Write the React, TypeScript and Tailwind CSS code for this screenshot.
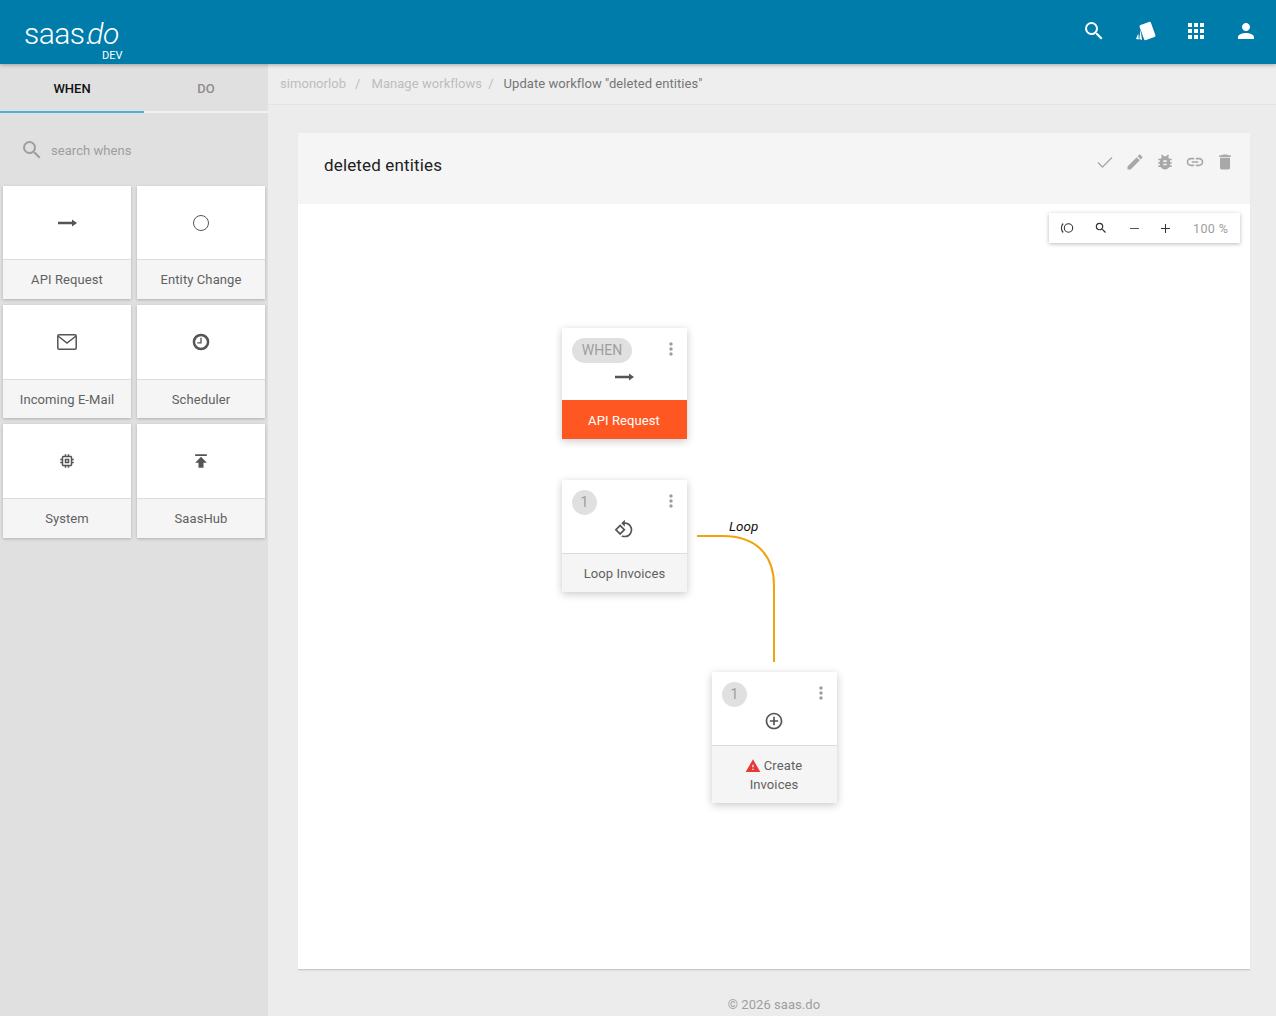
import { ReactNode } from "react";

const paths = {
  search: "M15.5 14h-.79l-.28-.27A6.471 6.471 0 0 0 16 9.5 6.5 6.5 0 1 0 9.5 16c1.61 0 3.09-.59 4.23-1.57l.27.28v.79l5 4.99L20.49 19l-4.99-5zm-6 0C7.01 14 5 11.99 5 9.5S7.01 5 9.5 5 14 7.01 14 9.5 11.99 14 9.5 14z",
  apps: "M4 8h4V4H4v4zm6 12h4v-4h-4v4zm-6 0h4v-4H4v4zm0-6h4v-4H4v4zm6 0h4v-4h-4v4zm6-10v4h4V4h-4zm-6 4h4V4h-4v4zm6 6h4v-4h-4v4zm0 6h4v-4h-4v4z",
  person: "M12 12c2.21 0 4-1.79 4-4s-1.79-4-4-4-4 1.79-4 4 1.79 4 4 4zm0 2c-2.67 0-8 1.34-8 4v2h16v-2c0-2.66-5.33-4-8-4z",
  edit: "M3 17.25V21h3.75L17.81 9.94l-3.75-3.75L3 17.25zM20.71 7.04c.39-.39.39-1.02 0-1.41l-2.34-2.34c-.39-.39-1.02-.39-1.41 0l-1.83 1.83 3.75 3.75 1.83-1.83z",
  bug: "M20 8h-2.81c-.45-.78-1.07-1.45-1.82-1.96L17 4.41 15.59 3l-2.17 2.17C12.96 5.06 12.49 5 12 5c-.49 0-.96.06-1.41.17L8.41 3 7 4.41l1.62 1.63C7.88 6.55 7.26 7.22 6.81 8H4v2h2.09c-.05.33-.09.66-.09 1v1H4v2h2v1c0 .34.04.67.09 1H4v2h2.81c1.04 1.79 2.97 3 5.19 3s4.15-1.21 5.19-3H20v-2h-2.09c.05-.33.09-.66.09-1v-1h2v-2h-2v-1c0-.34-.04-.67-.09-1H20V8zm-6 8h-4v-2h4v2zm0-4h-4v-2h4v2z",
  link: "M3.9 12c0-1.71 1.39-3.1 3.1-3.1h4V7H7c-2.76 0-5 2.24-5 5s2.24 5 5 5h4v-1.9H7c-1.71 0-3.1-1.39-3.1-3.1zM8 13h8v-2H8v2zm9-6h-4v1.9h4c1.71 0 3.1 1.39 3.1 3.1s-1.39 3.1-3.1 3.1h-4V17h4c2.76 0 5-2.24 5-5s-2.24-5-5-5z",
  trash: "M6 19c0 1.1.9 2 2 2h8c1.1 0 2-.9 2-2V7H6v12zM19 4h-3.5l-1-1h-5l-1 1H5v2h14V4z",
  publish: "M5 4v2h14V4H5zm0 10h4v6h6v-6h4l-7-7-7 7z",
  memory: "M15 9H9v6h6V9zm-2 4h-2v-2h2v2zm8-2V9h-2V7c0-1.1-.9-2-2-2h-2V3h-2v2h-2V3H9v2H7c-1.1 0-2 .9-2 2v2H3v2h2v2H3v2h2v2c0 1.1.9 2 2 2h2v2h2v-2h2v2h2v-2h2c1.1 0 2-.9 2-2v-2h2v-2h-2v-2h2zm-4 6H7V7h10v10z",
  warning: "M1 21h22L12 2 1 21zm12-3h-2v-2h2v2zm0-4h-2v-4h2v4z",
  add: "M13 7h-2v4H7v2h4v4h2v-4h4v-2h-4V7zm-1-5C6.48 2 2 6.48 2 12s4.48 10 10 10 10-4.48 10-10S17.52 2 12 2zm0 18c-4.41 0-8-3.59-8-8s3.59-8 8-8 8 3.59 8 8-3.59 8-8 8z",
  loop: "M7.34 6.41L.86 12.9l6.49 6.48 6.49-6.48-6.5-6.49zM3.69 12.9l3.66-3.66L11 12.9l-3.66 3.66-3.65-3.66zm15.67-6.26C17.61 4.88 15.3 4 13 4V.76L8.76 5 13 9.24V6c1.79 0 3.58.68 4.95 2.05 2.73 2.73 2.73 7.17 0 9.9C16.58 19.32 14.79 20 13 20c-.97 0-1.94-.21-2.84-.61l-1.49 1.49C10.02 21.62 11.51 22 13 22c2.3 0 4.61-.88 6.36-2.64 3.52-3.51 3.52-9.21 0-12.72z",
  clock: "M12 2a10 10 0 1 0 0 20 10 10 0 0 0 0-20zm0 17a7 7 0 1 1 0-14 7 7 0 0 1 0 14zm.8-12h-1.600v5.200H7.500v1.600h5.300z",
  more: "M12 8c1.1 0 2-.9 2-2s-.9-2-2-2-2 .9-2 2 .9 2 2 2zm0 2c-1.1 0-2 .9-2 2s.9 2 2 2 2-.9 2-2-.9-2-2-2zm0 6c-1.1 0-2 .9-2 2s.9 2 2 2 2-.9 2-2-.9-2-2-2z",
};

function Icon({ d, className }: { d: string; className: string }) {
  return (
    <svg viewBox="0 0 24 24" className={className} fill="currentColor">
      <path d={d} />
    </svg>
  );
}

function ArrowRight({ className }: { className: string }) {
  return (
    <svg viewBox="0 0 19 10" className={className} fill="currentColor">
      <path d="M0 3.800h14V1.500l5 3.500-5 3.500V6.200H0z" />
    </svg>
  );
}

function CardsIcon() {
  return (
    <svg viewBox="0 0 24 24" className="w-6 h-6 text-white" fill="currentColor">
      <rect x="7.500" y="4" width="12" height="16" rx="1.500" transform="rotate(-20 13.500 12)" />
      <path d="M6.600 10.500 8 21l-2.700-1zM4.300 14.500 4.800 20.500 2 20z" />
    </svg>
  );
}

function Tile({
  label,
  icon,
  topClass,
  labelClass = "",
}: {
  label: string;
  icon: ReactNode;
  topClass: string;
  labelClass?: string;
}) {
  return (
    <div className="bg-white shadow-[0_1px_3px_rgba(0,0,0,0.22)] flex flex-col">
      <div className={`${topClass} flex items-center justify-center text-[#555]`}>{icon}</div>
      <div className={`${labelClass} flex-1 bg-[#f5f5f5] border-t border-[#dcdcdc] flex items-center justify-center text-[13px] tracking-[0.1px] text-[#616161]`}>
        {label}
      </div>
    </div>
  );
}

function NodeShell({
  left,
  top,
  topClass,
  badge,
  icon,
  children,
}: {
  left: number;
  top: number;
  topClass: string;
  badge: ReactNode;
  icon: ReactNode;
  children: ReactNode;
}) {
  return (
    <div className="absolute w-[125px] bg-white shadow-[0_2px_8px_rgba(0,0,0,0.22)]" style={{ left, top }}>
      <div className={`relative ${topClass}`}>
        <div className="absolute left-[10px] top-[10px]">{badge}</div>
        <Icon d={paths.more} className="absolute right-[6px] top-[11px] w-[20px] h-[20px] text-[#9e9e9e]" />
        <div className="absolute left-0 right-[1px] top-[41px] flex justify-center text-[#555]">{icon}</div>
      </div>
      {children}
    </div>
  );
}

function NumberBadge() {
  return (
    <div className="w-[25px] h-[25px] rounded-full bg-[#e0e0e0] text-[#9e9e9e] text-[14px] flex items-center justify-center">1</div>
  );
}

export default function App() {
  return (
    <div className="w-[1276px] h-[1016px] overflow-hidden flex flex-col bg-[#ececec] font-['Roboto',sans-serif]">
      <header className="relative z-10 h-16 shrink-0 bg-[#007cab] shadow-[0_1px_4px_rgba(0,0,0,0.3)] flex items-center justify-between text-white">
        <div className="relative ml-[24px] mt-[4px] text-[30px] font-light leading-none tracking-[-0.5px]">
          saas<span className="tracking-[-4.5px]">.</span>
          <span className="italic">do</span>
          <span className="absolute left-[78px] top-[30px] text-[11px] leading-[14px] font-normal tracking-normal not-italic">DEV</span>
        </div>
        <div className="flex items-center gap-[26px] mr-[18px] mt-[-3px]">
          <Icon d={paths.search} className="w-6 h-6 mr-[2px]" />
          <CardsIcon />
          <Icon d={paths.apps} className="w-6 h-6" />
          <Icon d={paths.person} className="w-6 h-6" />
        </div>
      </header>

      <div className="flex flex-1 min-h-0">
        <aside className="w-[268px] shrink-0 bg-[#e0e0e0] flex flex-col">
          <div className="flex h-[49px] text-[13px] font-medium">
            <div className="w-[144px] flex items-center justify-center pt-[2px] text-[#111] border-b-2 border-[#45b4d0]">WHEN</div>
            <div className="flex-1 flex items-center justify-center pt-[2px] text-[#8e8e8e] border-b-2 border-[#f0f0f0]">DO</div>
          </div>
          <div className="h-[73px] flex items-center pl-[20px] gap-[7px] text-[#9e9e9e]">
            <Icon d={paths.search} className="w-6 h-6" />
            <span className="text-[13px] tracking-[0.05px] mt-[2px]">search whens</span>
          </div>
          <div className="grid grid-cols-2 grid-rows-[113px_113px_114px] gap-x-[6px] gap-y-[6px] px-[3px]">
            <Tile topClass="h-[73px]" label="API Request" icon={<ArrowRight className="w-[19px] h-[10px]" />} />
            <Tile
              topClass="h-[73px]"
              label="Entity Change"
              icon={<div className="w-[16px] h-[16px] rounded-full border-[1.5px] border-[#555]" />}
            />
            <Tile
              topClass="h-[74px]"
              labelClass="pt-[2px]"
              label="Incoming E-Mail"
              icon={
                <svg viewBox="0 0 20 16" className="w-[20px] h-[16px]" fill="none" stroke="currentColor" strokeWidth="1.5">
                  <rect x="0.8" y="0.8" width="18.4" height="14.4" rx="1.2" />
                  <path d="M1 2l9 7 9-7" />
                </svg>
              }
            />
            <Tile topClass="h-[74px]" labelClass="pt-[2px]" label="Scheduler" icon={<Icon d={paths.clock} className="w-[20px] h-[20px]" />} />
            <Tile topClass="h-[74px]" label="System" icon={<Icon d={paths.memory} className="w-[18px] h-[18px]" />} />
            <Tile topClass="h-[74px]" label="SaasHub" icon={<Icon d={paths.publish} className="w-[20px] h-[20px]" />} />
          </div>
        </aside>

        <main className="flex-1 min-w-0 flex flex-col">
          <nav className="h-[41px] shrink-0 bg-[#eeeeee] border-b border-[#e4e4e4] flex items-center pl-[12px] pb-[1px] text-[13px] tracking-[0.05px] text-[#bdbdbd]">
            <span>simonorlob</span>
            <span className="ml-[9px] mr-[11px]">/</span>
            <span>Manage workflows</span>
            <span className="ml-[6px] mr-[10px]">/</span>
            <span className="text-[#757575]">Update workflow "deleted entities"</span>
          </nav>

          <section className="mt-[28px] ml-[30px] mr-[26px] h-[837px] bg-white border-b border-[#c8c8c8] shadow-[0_1px_1px_rgba(0,0,0,0.05)] flex flex-col">
            <div className="h-[71px] shrink-0 bg-[#f5f5f5] flex items-center justify-between pl-[26px] pr-[15px]">
              <h1 className="text-[17px] text-[#212121] tracking-[0.15px] mt-[-6px]">deleted entities</h1>
              <div className="flex items-center gap-[10px] text-[#a8a8a8] mt-[-13px]">
                <svg viewBox="0 0 20 20" className="w-5 h-5" fill="none" stroke="currentColor" strokeWidth="1.4">
                  <path d="M3 10.5l4.5 4.5L17 5.5" />
                </svg>
                <Icon d={paths.edit} className="w-5 h-5" />
                <Icon d={paths.bug} className="w-5 h-5" />
                <Icon d={paths.link} className="w-5 h-5" />
                <Icon d={paths.trash} className="w-5 h-5" />
              </div>
            </div>

            <div className="relative flex-1">
              <div className="absolute left-[751px] top-[9px] w-[191px] h-[30px] bg-white shadow-[0_1px_4px_rgba(0,0,0,0.28)] flex items-center text-[#333]">
                <svg viewBox="0 0 14 12" className="absolute left-[11px] top-[9px] w-[14px] h-[12px]" fill="none" stroke="currentColor" strokeWidth="1.1">
                  <circle cx="8.5" cy="6" r="4.2" />
                  <path d="M3.2 1.5C.8 4 .8 8 3.2 10.500" />
                </svg>
                <Icon d={paths.search} className="absolute left-[45px] top-[8px] w-[14px] h-[14px]" />
                <span className="absolute left-[81px] top-[15px] w-[9px] h-[1px] bg-[#555]" />
                <span className="absolute left-[112px] top-[15px] w-[9px] h-[1px] bg-[#333]" />
                <span className="absolute left-[116px] top-[11px] w-[1px] h-[9px] bg-[#333]" />
                <span className="absolute left-[144px] top-[7px] text-[12.5px] tracking-[0.4px] text-[#9e9e9e]">100 %</span>
              </div>

              <NodeShell
                left={264}
                top={124}
                topClass="h-[72px]"
                badge={
                  <div className="h-[25px] w-[60px] rounded-full bg-[#e0e0e0] text-[#9e9e9e] text-[14px] flex items-center justify-center">WHEN</div>
                }
                icon={<ArrowRight className="w-[19px] h-[10px] mt-[3px]" />}
              >
                <div className="h-[39px] pt-[2px] pr-[1px] bg-[#ff5722] text-white text-[13px] tracking-[0.1px] flex items-center justify-center">API Request</div>
              </NodeShell>

              <NodeShell
                left={264}
                top={276}
                topClass="h-[73px]"
                badge={<NumberBadge />}
                icon={<Icon d={paths.loop} className="w-[20px] h-[20px] mt-[-2px]" />}
              >
                <div className="h-[39px] pt-[2px] bg-[#f5f5f5] border-t border-[#dcdcdc] text-[#616161] text-[13px] tracking-[0.1px] flex items-center justify-center">Loop Invoices</div>
              </NodeShell>

              <NodeShell
                left={414}
                top={468}
                topClass="h-[73px]"
                badge={<NumberBadge />}
                icon={<Icon d={paths.add} className="w-[20px] h-[20px] mt-[-2px]" />}
              >
                <div className="h-[58px] bg-[#f5f5f5] border-t border-[#dcdcdc] text-[#616161] text-[13px] tracking-[0.1px] leading-[19px] text-center pt-[10px] pr-[1px]">
                  <div className="flex items-center justify-center gap-[3px] pr-[1px]">
                    <Icon d={paths.warning} className="w-[16px] h-[16px] text-[#e53935]" />
                    <span>Create</span>
                  </div>
                  <div>Invoices</div>
                </div>
              </NodeShell>

              <svg className="absolute left-[399px] top-[330px] w-[80px] h-[130px]" viewBox="0 0 80 130" fill="none">
                <path d="M0 2h26c30 0 51 16 51 50v76" stroke="#f0a30a" strokeWidth="2" />
              </svg>
              <span className="absolute left-[431px] top-[312px] text-[13.5px] italic text-[#111]">Loop</span>
            </div>
          </section>

          <footer className="mt-[25px] ml-[30px] mr-[26px] text-center text-[13px] tracking-[0.05px] text-[#9e9e9e]">© 2026 saas.do</footer>
        </main>
      </div>
    </div>
  );
}
